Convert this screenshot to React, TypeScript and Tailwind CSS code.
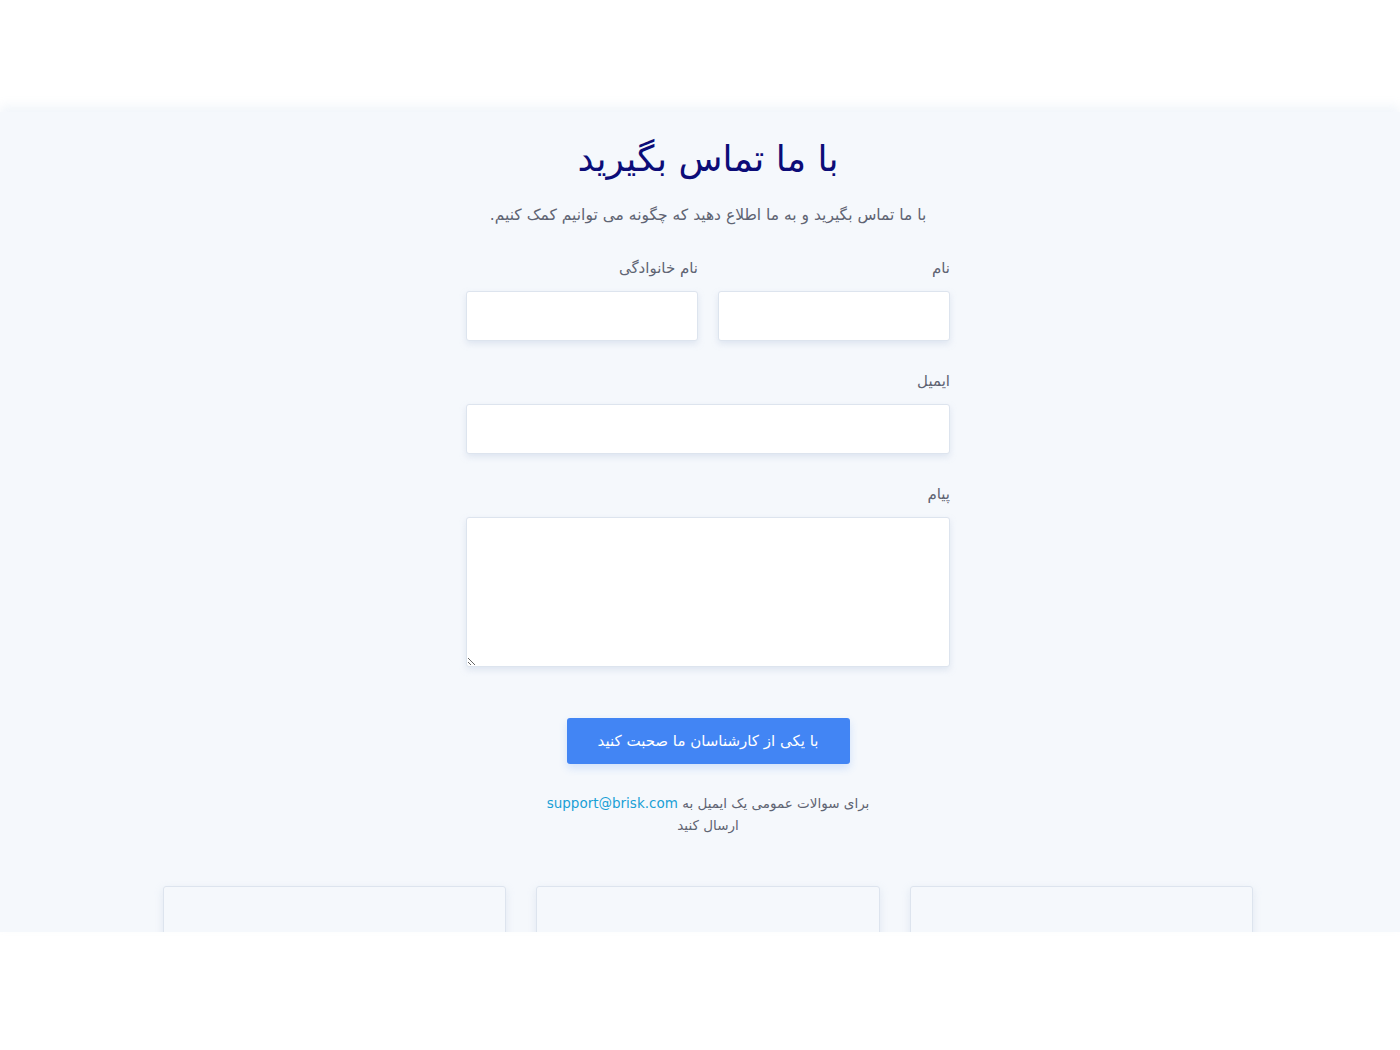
import { useState } from "react";

const fieldClass =
    "w-full h-[50px] bg-white border border-[#dde4ee] rounded-[3px] shadow-[0_3px_6px_rgba(180,195,220,0.35)] px-3 text-sm outline-none";

const Field: React.FC<{ label: string; children: React.ReactNode }> = ({ label, children }) => (
    <div className="flex flex-col gap-[12px]">
        <label className="text-[15px] text-[#5f6473] leading-[22px]">{label}</label>
        {children}
    </div>
);

const ContactSection: React.FC = () => {
    const [form, setForm] = useState({ first: "", last: "", email: "", message: "" });

    return (
        <section className="h-[820px] overflow-hidden bg-[#f5f8fc] shadow-[0_-6px_10px_rgba(240,244,250,0.9)] pl-4">
            <div className="flex flex-col items-center pt-[22px]">
                <h1 className="text-[36px] leading-[50px] text-[#0c0c78]">با ما تماس بگیرید</h1>
                <p className="mt-[20px] text-[15.5px] text-[#5f6473]">
                    با ما تماس بگیرید و به ما اطلاع دهید که چگونه می توانیم کمک کنیم.
                </p>

                <form className="w-[484px] mt-[30px] space-y-[29px]" onSubmit={(e) => e.preventDefault()}>
                    <div className="grid grid-cols-2 gap-5">
                        <Field label="نام">
                            <input className={fieldClass} value={form.first} onChange={(e) => setForm({ ...form, first: e.target.value })} />
                        </Field>
                        <Field label="نام خانوادگی">
                            <input className={fieldClass} value={form.last} onChange={(e) => setForm({ ...form, last: e.target.value })} />
                        </Field>
                    </div>

                    <Field label="ایمیل">
                        <input className={fieldClass} value={form.email} onChange={(e) => setForm({ ...form, email: e.target.value })} />
                    </Field>

                    <Field label="پیام">
                        <textarea
                            className="w-full h-[150px] bg-white border border-[#dde4ee] rounded-[3px] shadow-[0_3px_6px_rgba(180,195,220,0.35)] p-3 text-sm outline-none block"
                            value={form.message}
                            onChange={(e) => setForm({ ...form, message: e.target.value })}
                        />
                    </Field>

                    <div className="flex justify-center pt-[22px]">
                        <button className="w-[283px] h-[46px] rounded-[3px] bg-[#4285f4] text-white text-[15px] shadow-[0_4px_8px_rgba(66,133,244,0.2)]">
                            با یکی از کارشناسان ما صحبت کنید
                        </button>
                    </div>
                </form>

                <p className="mt-[28px] text-center text-[13.5px] leading-[22px] text-[#5f6473]">
                    برای سوالات عمومی یک ایمیل به{" "}
                    <a href="#" className="text-[#1aa0d6]">support@brisk.com</a>
                    <br />
                    ارسال کنید
                </p>

                <div className="mt-[50px] grid grid-cols-3 gap-[30px] w-[1090px]">
                    {[0, 1, 2].map((i) => (
                        <div key={i} className="h-[200px] border border-[#dde4ee] rounded-[3px] shadow-[0_3px_8px_rgba(180,195,220,0.3)]" />
                    ))}
                </div>
            </div>
        </section>
    );
};

export default function App() {
    return (
        <div dir="rtl" className="min-h-[1050px] bg-white" style={{ fontFamily: '"DejaVu Sans", "Noto Sans", sans-serif' }}>
            <div className="h-[112px]" />
            <ContactSection />
        </div>
    );
}
